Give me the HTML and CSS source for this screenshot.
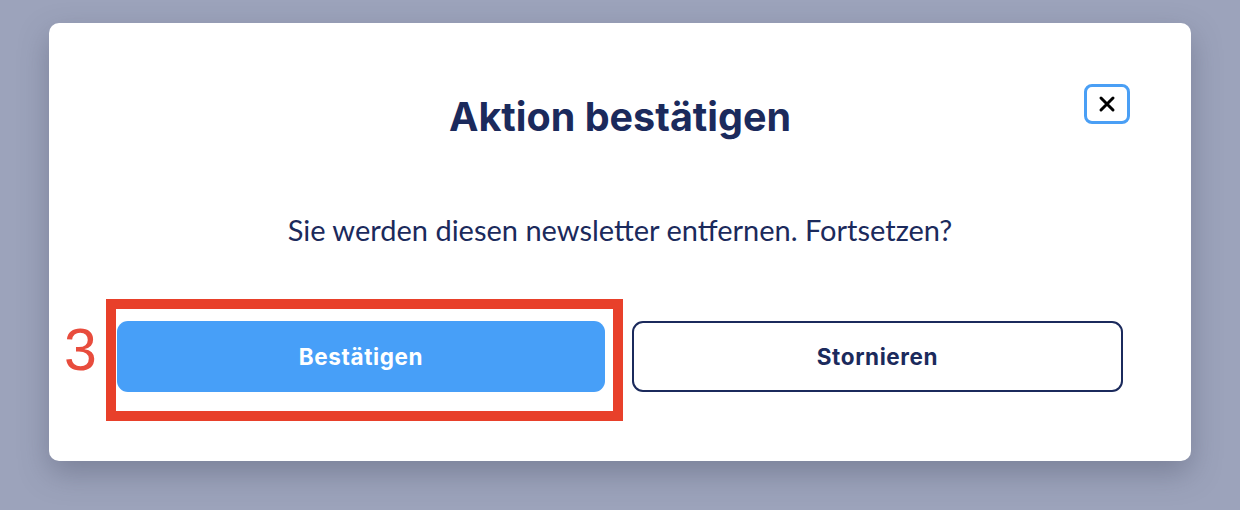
FILE: index.html
```html
<!DOCTYPE html>
<html lang="de">
<head>
  <meta charset="UTF-8">
  <meta name="viewport" content="width=device-width, initial-scale=1.0">
  <title>Aktion bestätigen</title>
  <link rel="stylesheet" href="styles.css">
</head>
<body>

  <div class="modal">
    <button class="close-btn" aria-label="Schließen">
      <svg width="18" height="18" viewBox="0 0 18 18">
        <path d="M3 3 L15 15 M15 3 L3 15" stroke="#000" stroke-width="3" stroke-linecap="round" fill="none"/>
      </svg>
    </button>

    <h2 class="modal-title">Aktion bestätigen</h2>
    <p class="modal-text">Sie werden diesen newsletter entfernen. Fortsetzen?</p>

    <div class="modal-actions">
      <div class="highlight-wrap">
        <span class="step-number">3</span>
        <span class="highlight-box"></span>
        <button class="btn btn-primary">Bestätigen</button>
      </div>
      <button class="btn btn-outline">Stornieren</button>
    </div>
  </div>

</body>
</html>
```

FILE: styles.css
```css
* {
  box-sizing: border-box;
}

body {
  margin: 0;
  padding: 23px 49px 0;
  height: 510px;
  overflow: hidden;
  background: #9ca3bb;
  font-family: 'Inter', 'Roboto', sans-serif;
  color: #1b2a5c;
}

.modal {
  position: relative;
  background: #ffffff;
  border-radius: 10px;
  height: 438px;
  padding: 70px 68px 0;
  box-shadow: 0 12px 30px rgba(60, 66, 90, 0.35);
}

.close-btn {
  position: absolute;
  top: 61px;
  right: 61px;
  width: 46px;
  height: 40px;
  border: 3px solid #4a9ff5;
  border-radius: 8px;
  background: #fff;
  padding: 0;
  display: flex;
  align-items: center;
  justify-content: center;
  cursor: pointer;
}

.modal-title {
  margin: 0;
  text-align: center;
  font-size: 39.5px;
  font-weight: 700;
  line-height: 48px;
  color: #1b2a5c;
}

.modal-text {
  margin: 73px 0 0;
  text-align: center;
  font-family: 'Lato', sans-serif;
  font-size: 29px;
  line-height: 32px;
  color: #1b2a5c;
}

.modal-actions {
  margin-top: 75px;
  display: grid;
  grid-template-columns: 488px 1fr;
  gap: 27px;
}

.highlight-wrap {
  position: relative;
}

.btn {
  width: 100%;
  height: 71px;
  border-radius: 11px;
  font-family: 'Inter', 'Roboto', sans-serif;
  font-size: 22.5px;
  font-weight: 700;
  letter-spacing: 0.6px;
  cursor: pointer;
}

.btn-primary {
  background: #479ff8;
  color: #ffffff;
  border: none;
}

.btn-outline {
  background: #ffffff;
  color: #1b2a5c;
  border: 2px solid #1b2a5c;
}

/* annotation overlay */
.highlight-box {
  position: absolute;
  left: -11px;
  top: -22px;
  right: -18px;
  bottom: -29px;
  border: 10px solid #e8402a;
  pointer-events: none;
}

.step-number {
  position: absolute;
  left: -53px;
  top: 0;
  font-family: 'Liberation Sans', sans-serif;
  font-size: 59px;
  line-height: 58px;
  color: #e84c3d;
}
```
